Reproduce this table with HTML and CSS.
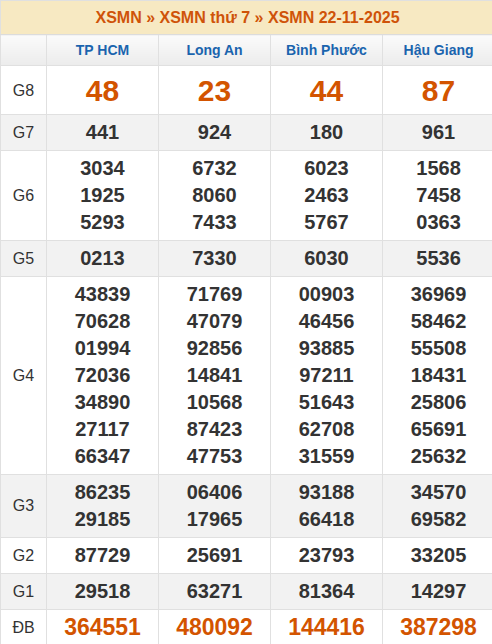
FILE: index.html
```html
<!DOCTYPE html>
<html lang="vi">
<head>
<meta charset="utf-8">
<title>XSMN 22-11-2025</title>
<link rel="stylesheet" href="styles.css">
</head>
<body>
<table class="kq">
  <colgroup>
    <col class="c-lbl">
    <col class="c-num">
    <col class="c-num">
    <col class="c-num">
    <col class="c-num">
  </colgroup>
  <thead>
    <tr class="title-row">
      <th colspan="5">XSMN » XSMN thứ 7 » XSMN 22-11-2025</th>
    </tr>
    <tr class="city-row">
      <th class="lbl"></th>
      <th>TP HCM</th>
      <th>Long An</th>
      <th>Bình Phước</th>
      <th>Hậu Giang</th>
    </tr>
  </thead>
  <tbody>
    <tr class="g8">
      <td class="lbl">G8</td>
      <td><div>48</div></td><td><div>23</div></td><td><div>44</div></td><td><div>87</div></td>
    </tr>
    <tr class="alt">
      <td class="lbl">G7</td>
      <td><div>441</div></td><td><div>924</div></td><td><div>180</div></td><td><div>961</div></td>
    </tr>
    <tr>
      <td class="lbl">G6</td>
      <td><div>3034</div><div>1925</div><div>5293</div></td>
      <td><div>6732</div><div>8060</div><div>7433</div></td>
      <td><div>6023</div><div>2463</div><div>5767</div></td>
      <td><div>1568</div><div>7458</div><div>0363</div></td>
    </tr>
    <tr class="alt">
      <td class="lbl">G5</td>
      <td><div>0213</div></td><td><div>7330</div></td><td><div>6030</div></td><td><div>5536</div></td>
    </tr>
    <tr>
      <td class="lbl">G4</td>
      <td><div>43839</div><div>70628</div><div>01994</div><div>72036</div><div>34890</div><div>27117</div><div>66347</div></td>
      <td><div>71769</div><div>47079</div><div>92856</div><div>14841</div><div>10568</div><div>87423</div><div>47753</div></td>
      <td><div>00903</div><div>46456</div><div>93885</div><div>97211</div><div>51643</div><div>62708</div><div>31559</div></td>
      <td><div>36969</div><div>58462</div><div>55508</div><div>18431</div><div>25806</div><div>65691</div><div>25632</div></td>
    </tr>
    <tr class="alt">
      <td class="lbl">G3</td>
      <td><div>86235</div><div>29185</div></td>
      <td><div>06406</div><div>17965</div></td>
      <td><div>93188</div><div>66418</div></td>
      <td><div>34570</div><div>69582</div></td>
    </tr>
    <tr>
      <td class="lbl">G2</td>
      <td><div>87729</div></td><td><div>25691</div></td><td><div>23793</div></td><td><div>33205</div></td>
    </tr>
    <tr class="alt">
      <td class="lbl">G1</td>
      <td><div>29518</div></td><td><div>63271</div></td><td><div>81364</div></td><td><div>14297</div></td>
    </tr>
    <tr class="db">
      <td class="lbl">ĐB</td>
      <td><div>364551</div></td><td><div>480092</div></td><td><div>144416</div></td><td><div>387298</div></td>
    </tr>
  </tbody>
</table>
</body>
</html>
```

FILE: styles.css
```css
html, body {
  margin: 0;
  padding: 0;
  background: #fff;
}

body {
  font-family: "Liberation Sans", Arial, sans-serif;
  color: #333;
}

.kq {
  width: 492px;
  border-collapse: collapse;
  table-layout: fixed;
  border: 1px solid #c8c8c8;
}

.c-lbl {
  width: 46px;
}

.c-num {
  width: 112px;
}

.kq th,
.kq td {
  border: 1px solid #e0e0e0;
  text-align: center;
  padding: 0;
}

.title-row th {
  height: 33px;
  background: #f7e9c2;
  color: #cf5309;
  font-size: 16px;
  font-weight: bold;
  border-bottom: 1px solid #dcdcdc;
}

.city-row th {
  height: 30px;
  background: linear-gradient(#fbfbfb, #ececec);
  color: #1a64ae;
  font-size: 14px;
  font-weight: bold;
}

.kq td {
  font-size: 20px;
  font-weight: bold;
  padding: 4px 0;
}

.kq td div {
  line-height: 27px;
}

.kq td.lbl {
  font-size: 16px;
  font-weight: normal;
  color: #333;
}

.alt td {
  background: #f2f2f2;
}

.g8 td {
  padding: 4px 0 3px;
}

.g8 td div {
  font-size: 30px;
  line-height: 41px;
  color: #d35400;
}

.db td div {
  font-size: 23px;
  color: #d35400;
}
```
